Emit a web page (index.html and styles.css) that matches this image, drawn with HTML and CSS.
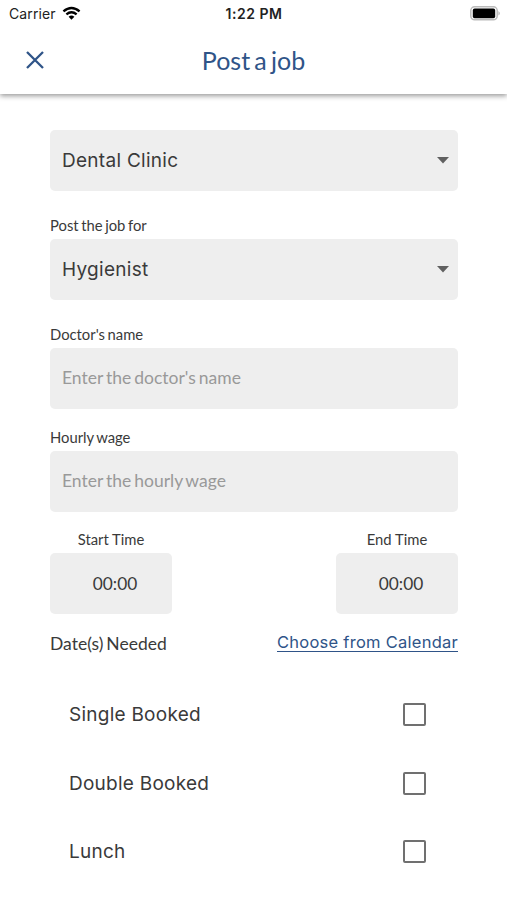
FILE: index.html
```html
<!DOCTYPE html>
<html lang="en">
<head>
<meta charset="utf-8">
<title>Post a job</title>
<link rel="stylesheet" href="styles.css">
</head>
<body>
<header class="header">
  <div class="status">
    <div class="carrier"><span class="carrier-name">Carrier</span>
      <svg width="19" height="15" viewBox="0 0 20 15" fill="none" stroke="#000" stroke-width="2.5"><path d="M1.5 5.2Q10-2 18.5 5.2M4.6 8.5Q10 4 15.4 8.5"/><path d="M7 11Q10 8.4 13 11L10 14Z" fill="#000" stroke="none"/></svg>
    </div>
    <span class="clock">1:22 PM</span>
    <svg class="battery" width="31" height="15" viewBox="0 0 31 15"><rect x=".8" y=".8" width="26.4" height="13" rx="3.8" fill="#fff" stroke="#bbb" stroke-width="1.5"/><rect x="2.8" y="2.6" width="22.4" height="9.6" rx="1.8" fill="#000"/><path d="M28.5 5Q31 7.3 28.5 9.6Z" fill="#aaa"/></svg>
  </div>
  <div class="titlebar">
    <svg class="close" width="18" height="18" viewBox="0 0 18 18" stroke="#2f5488" stroke-width="2.3"><path d="M1 1L17 17M17 1L1 17"/></svg>
    <h1 class="title"><span>Post a job</span></h1>
  </div>
</header>
<main class="form">
  <div class="field select clinic"><span>Dental Clinic</span><svg width="12" height="7" viewBox="0 0 12 7"><path d="M0 0H12L6 6.5Z" fill="#606060"/></svg></div>
  <div class="label l-job"><span>Post the job for</span></div>
  <div class="field select"><span>Hygienist</span><svg width="12" height="7" viewBox="0 0 12 7"><path d="M0 0H12L6 6.5Z" fill="#606060"/></svg></div>
  <div class="label l-doctor"><span>Doctor's name</span></div>
  <div class="field placeholder"><span>Enter the doctor's name</span></div>
  <div class="label l-wage"><span>Hourly wage</span></div>
  <div class="field placeholder"><span>Enter the hourly wage</span></div>
  <div class="times">
    <div class="time"><div class="label">Start Time</div><div class="field">00:00</div></div>
    <div class="time"><div class="label">End Time</div><div class="field">00:00</div></div>
  </div>
  <div class="dates"><span class="needed">Date(s) Needed</span><a class="calendar">Choose from Calendar</a></div>
  <div class="checks">
    <div class="check"><span>Single Booked</span><i class="box"></i></div>
    <div class="check"><span>Double Booked</span><i class="box"></i></div>
    <div class="check"><span>Lunch</span><i class="box"></i></div>
  </div>
</main>
</body>
</html>
```

FILE: styles.css
```css
* { box-sizing: border-box; }
body { margin: 0; height: 900px; overflow: hidden; background: #fff; color: #3a3a3a; font-family: Lato, sans-serif; }
.header { height: 94px; box-shadow: 0 2px 5px rgba(0,0,0,.4); }
.status { height: 27px; display: grid; grid-template-columns: 1fr auto 1fr; align-items: center; padding: 0 7px 0 9px; font: 14px/27px Inter, sans-serif; color: #222; }
.carrier { display: flex; align-items: center; gap: 6px; }
.carrier-name { letter-spacing: .12px; }
.clock { font-weight: 600; font-size: 14px; letter-spacing: .5px; margin-right: 1px; }
.battery { justify-self: end; margin-right: -1px; }
.titlebar { height: 67px; display: grid; grid-template-columns: 26px 1fr 26px; align-items: center; }
.close { margin: 0 0 2px 26px; }
.title { margin: 0; text-align: center; font-size: 25px; line-height: 67px; font-weight: 400; word-spacing: -2.2px; color: #2f5488; }
.form { padding: 36px 49px 0 50px; }
.field { height: 61px; border-radius: 5px; background: #eee; display: flex; align-items: center; padding: 0 12px; }
.select { justify-content: space-between; padding-right: 9px; font: 19px Inter, sans-serif; letter-spacing: .28px; }
.select span { padding-bottom: 1px; }
.label { height: 31px; font-size: 14.8px; line-height: 30px; padding-top: 2px; word-spacing: -1.2px; }
.l-job { margin-top: 17px; }
.l-doctor { margin-top: 17px; }
.l-wage { margin-top: 11px; }
.placeholder { color: #999; font-size: 17.5px; word-spacing: -1.5px; }
.placeholder span { padding-bottom: 2px; }
.times { display: flex; justify-content: space-between; margin-top: 10px; }
.time { width: 122px; }
.time .label { text-align: center; word-spacing: 0; }
.time .field { justify-content: center; padding: 0 4px 1px 12px; font-size: 17.3px; }
.dates { height: 58px; display: flex; align-items: center; justify-content: space-between; }
.needed { font-size: 17.5px; word-spacing: -1.5px; padding-top: 1px; }
.calendar { font: 16.5px/18px Inter, sans-serif; letter-spacing: .26px; margin-bottom: 1px; color: #2f5488; border-bottom: 1px solid #2f5488; }
.checks { padding: 8.4px 32px 0 19px; }
.check { height: 68.5px; display: flex; align-items: center; justify-content: space-between; font: 19px Inter, sans-serif; letter-spacing: .25px; }
.box { width: 23px; height: 23px; border: 2px solid #707070; border-radius: 2px; }
```
